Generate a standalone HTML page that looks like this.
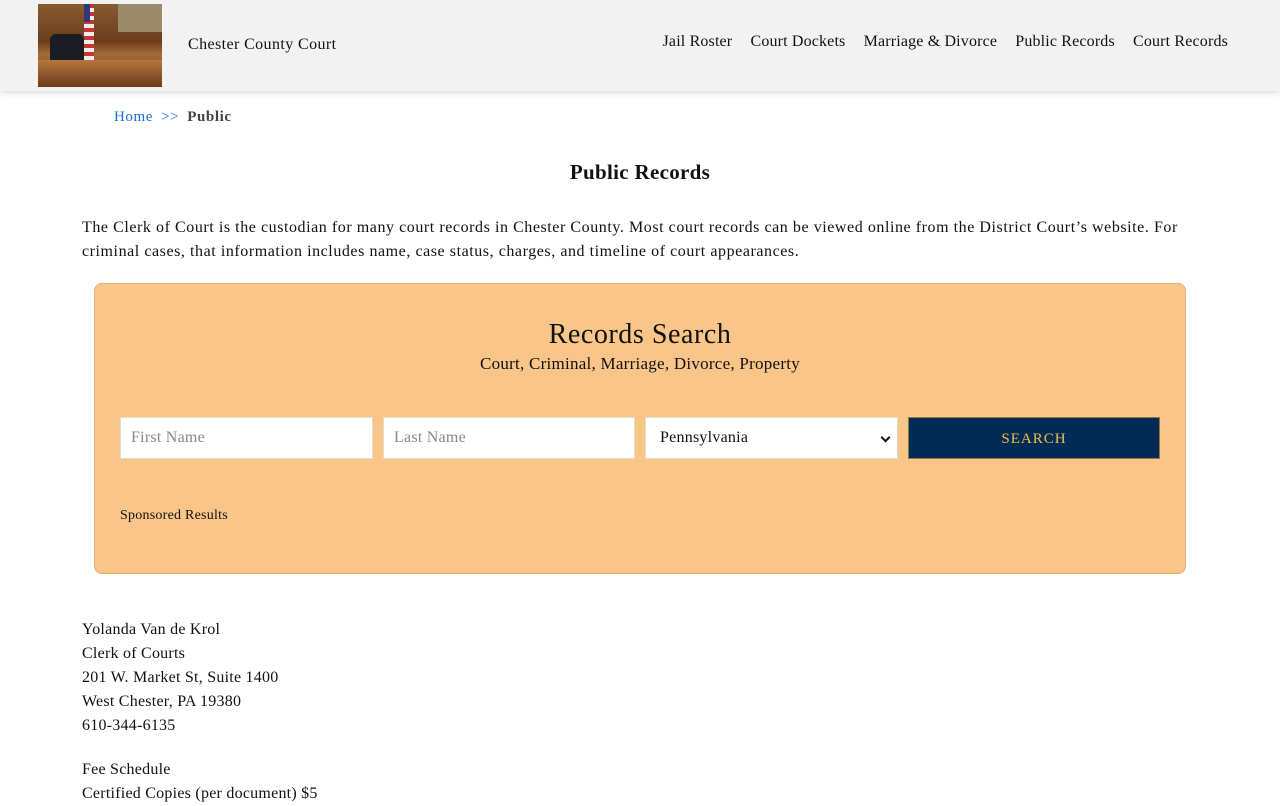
<!DOCTYPE html>
<html><head><meta charset="utf-8">
<style>
*{box-sizing:border-box;margin:0;padding:0}
body{width:1280px;height:800px;overflow:hidden;background:#fff;font-family:"Liberation Serif",serif;color:#111;letter-spacing:.015em}
header{height:91px;background:#f2f2f2;box-shadow:0 2px 6px rgba(0,0,0,.15);position:relative}
.logo{position:absolute;left:38px;top:4px;width:124px;height:83px;background:linear-gradient(180deg,#8a5a30 0%,#6b3d1c 45%,#a5693a 60%,#7a4722 100%);overflow:hidden}
.logo .chair{position:absolute;left:12px;top:30px;width:34px;height:32px;background:#1a1d22;border-radius:6px 6px 2px 2px}
.logo .flag{position:absolute;left:46px;top:0;width:10px;height:58px;background:repeating-linear-gradient(180deg,#c33 0 4px,#eee 4px 8px)}
.logo .flag:before{content:"";position:absolute;left:0;top:0;width:6px;height:18px;background:#2a3a7a}
.logo .desk{position:absolute;left:0;top:56px;width:124px;height:27px;background:linear-gradient(180deg,#b5773f,#6b3a18)}
.logo .wall{position:absolute;left:80px;top:0;width:44px;height:28px;background:#9c8a6a}
.site{position:absolute;left:188px;top:36px;font-size:16px;letter-spacing:.025em}
nav{position:absolute;right:52px;top:33px;font-size:16px;letter-spacing:.01em}
nav a{color:#111;text-decoration:none;margin-left:14px}
.bc{position:absolute;left:114px;top:109px;font-size:15px;letter-spacing:.04em}
.bc a{color:#1a6ed8;text-decoration:none}
.bc .s{color:#1a6ed8;margin:0 8px 0 8px}
.bc b{color:#444}
h1{position:absolute;top:160px;width:100%;text-align:center;font-size:21px;font-weight:bold;letter-spacing:.015em}
.intro{position:absolute;left:82px;top:216px;width:1110px;font-size:16px;line-height:24px;letter-spacing:.035em}
.box{position:absolute;left:94px;top:283px;width:1092px;height:291px;background:#fac588;border:1px solid #e0b070;border-radius:8px}
.box h2{position:absolute;top:35px;width:100%;text-align:center;font-weight:normal;font-size:28px;letter-spacing:.02em}
.box .sub{position:absolute;top:70px;width:100%;text-align:center;font-size:17px;letter-spacing:.015em}
.in{position:absolute;top:133px;height:42px;background:#fff;border:1px solid #ddc;font-size:16px;color:#888;padding:11px 10px}
.sel{color:#111;padding-left:14px}
.sel:after{content:"";position:absolute;right:8px;top:16px;width:5px;height:5px;border-right:2px solid #111;border-bottom:2px solid #111;transform:rotate(45deg)}
.btn{position:absolute;left:813px;top:133px;width:252px;height:42px;background:#022c55;border:1px solid #8a7a4a;color:#e8c34a;text-align:center;font-size:15px;letter-spacing:1px;padding-top:13px}
.spon{position:absolute;left:25px;top:224px;font-size:14px}
.addr{position:absolute;left:82px;top:618px;font-size:16px;line-height:24px;letter-spacing:.015em}
</style></head><body>
<header>
<div class="logo"><div class="wall"></div><div class="chair"></div><div class="flag"></div><div class="desk"></div></div>
<div class="site">Chester County Court</div>
<nav><a>Jail Roster</a> <a>Court Dockets</a> <a>Marriage &amp; Divorce</a> <a>Public Records</a> <a>Court Records</a></nav>
</header>
<div class="bc"><a>Home</a><span class="s">&gt;&gt;</span><b>Public</b></div>
<h1>Public Records</h1>
<p class="intro">The Clerk of Court is the custodian for many court records in Chester County. Most court records can be viewed online from the District Court’s website. For criminal cases, that information includes name, case status, charges, and timeline of court appearances.</p>
<div class="box">
<h2>Records Search</h2>
<div class="sub">Court, Criminal, Marriage, Divorce, Property</div>
<div class="in" style="left:25px;width:253px">First Name</div>
<div class="in" style="left:288px;width:252px">Last Name</div>
<div class="in sel" style="left:550px;width:253px">Pennsylvania</div>
<div class="btn">SEARCH</div>
<div class="spon">Sponsored Results</div>
</div>
<div class="addr">Yolanda Van de Krol<br>Clerk of Courts<br>201 W. Market St, Suite 1400<br>West Chester, PA 19380<br>610-344-6135<br><div style="height:20px"></div>Fee Schedule<br>Certified Copies (per document) $5</div>
</body></html>
